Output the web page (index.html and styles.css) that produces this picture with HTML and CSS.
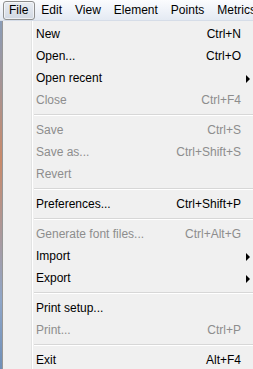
FILE: index.html
```html
<!DOCTYPE html>
<html lang="en">
<head>
  <meta charset="UTF-8">
  <title>File menu</title>
  <link rel="stylesheet" href="styles.css">
</head>
<body>
<div class="menubar">
  <span class="top active">File</span>
  <span class="top">Edit</span>
  <span class="top">View</span>
  <span class="top">Element</span>
  <span class="top">Points</span>
  <span class="top">Metrics</span>
</div>

<div class="menu">
  <div class="item"><span class="label">New</span><span class="key">Ctrl+N</span></div>
  <div class="item"><span class="label">Open...</span><span class="key">Ctrl+O</span></div>
  <div class="item sub"><span class="label">Open recent</span><span class="key"></span></div>
  <div class="item off"><span class="label">Close</span><span class="key">Ctrl+F4</span></div>
  <div class="sep"></div>
  <div class="item off"><span class="label">Save</span><span class="key">Ctrl+S</span></div>
  <div class="item off"><span class="label">Save as...</span><span class="key">Ctrl+Shift+S</span></div>
  <div class="item off"><span class="label">Revert</span><span class="key"></span></div>
  <div class="sep"></div>
  <div class="item"><span class="label">Preferences...</span><span class="key">Ctrl+Shift+P</span></div>
  <div class="sep"></div>
  <div class="item off"><span class="label">Generate font files...</span><span class="key">Ctrl+Alt+G</span></div>
  <div class="item sub"><span class="label">Import</span><span class="key"></span></div>
  <div class="item sub"><span class="label">Export</span><span class="key"></span></div>
  <div class="sep"></div>
  <div class="item"><span class="label">Print setup...</span><span class="key"></span></div>
  <div class="item off"><span class="label">Print...</span><span class="key">Ctrl+P</span></div>
  <div class="sep"></div>
  <div class="item"><span class="label">Exit</span><span class="key">Alt+F4</span></div>
</div>
</body>
</html>
```

FILE: styles.css
```css
* { box-sizing: border-box; }
body {
  margin: 0;
  font-family: "Liberation Sans", Arial, sans-serif;
  font-size: 12px;
  color: #000;
  background: linear-gradient(#7f9fc4 0, #c98a6a 160px, #8fa6c8 300px, #6f8fb8 369px);
  width: 253px;
  height: 369px;
  overflow: hidden;
}
.menubar {
  height: 21px;
  display: flex;
  align-items: center;
  background: linear-gradient(#fbfcfe, #e4eaf3);
  border-bottom: 1px solid #d6dde8;
  padding-left: 3px;
  white-space: nowrap;
  overflow: hidden;
}
.top {
  padding: 1px 6px 2px 5px;
  border: 1px solid transparent;
  line-height: 14px;
}
.active {
  border-color: #8e8f8f;
  border-radius: 3px;
  background: linear-gradient(#e8ecf2, #d2d9e3);
  box-shadow: inset 0 0 0 1px rgba(255, 255, 255, 0.6);
}
.menu {
  margin-left: 2px;
  border-left: 1px solid #979797;
  background: #f0f0f0;
  padding: 2px 0 0 2px;
  height: 348px;
  background-image: linear-gradient(to right,
    transparent 28px, #e2e3e3 28px, #e2e3e3 29px,
    #ffffff 29px, #ffffff 30px, transparent 30px);
}
.item {
  height: 22px;
  display: flex;
  align-items: center;
  padding-left: 31px;
  white-space: nowrap;
}
.label { flex: 1; }
.key {
  width: 90px;
  text-align: right;
  margin-right: 12px;
}
.off { color: #8d8d8d; }
.sub { position: relative; }
.sub::after {
  content: "";
  position: absolute;
  right: 3px;
  top: 8px;
  border-left: 4px solid #000;
  border-top: 4px solid transparent;
  border-bottom: 4px solid transparent;
}
.sep {
  height: 8px;
  margin-left: 29px;
  background: linear-gradient(transparent 3px, #d7d7d7 3px, #d7d7d7 4px, #ffffff 4px, #ffffff 5px, transparent 5px);
}
```
